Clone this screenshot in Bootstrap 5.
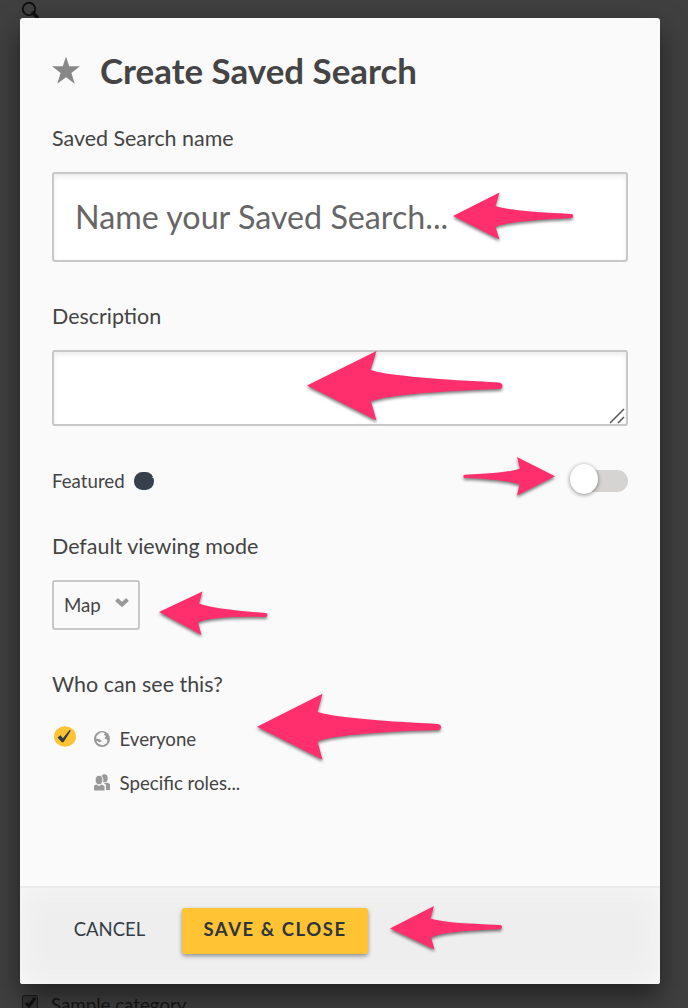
<!DOCTYPE html>
<html lang="en">
<head>
<meta charset="utf-8">
<title>Create Saved Search</title>
<link href="https://cdn.jsdelivr.net/npm/bootstrap@5.3.0/dist/css/bootstrap.min.css" rel="stylesheet">
<style>
body{font-family:Lato,"Open Sans",sans-serif;background:#404040;color:#444;width:688px;height:1008px;overflow:hidden}
.backdrop-top{height:18px;padding-left:21px}
.backdrop-bottom{height:24px;padding:9px 0 0 22px;overflow:hidden;color:#151515;font-size:18.7px;line-height:24px}
.backdrop-bottom svg{margin-top:2px}
.dialog{width:640px;height:966px;margin-left:20px;border-radius:3px;background:#fafafa;box-shadow:0 12px 28px rgba(0,0,0,.5)}
.dialog-main{padding:32px 32px 0}
.dialog-title{height:44px;margin-bottom:32px}
.dialog h1{font-size:34.9px;font-weight:700;line-height:44px;padding-bottom:2px}
.field-label{font-size:21.45px;line-height:24px;height:26px;margin:0;display:block}
.form-control.boxed,.mode-select{border:2px solid #c8c8c8;border-radius:3px;box-shadow:inset 0 3px 5px rgba(0,0,0,.07)}
.form-control.name-box{height:90px;font-size:32.25px;padding:0 21px 2px;margin-top:20px;margin-bottom:42px}
.form-control.name-box::placeholder{color:#666;opacity:1}
.desc-wrap{margin:20px 0 42px;height:76px}
.form-control.desc-box{height:76px;resize:none}
.grip{right:2px;bottom:1px}
.feature-row{height:26px;font-size:18.7px;line-height:26px;margin-bottom:40px}
.toggle-track{width:56px;height:22px;border-radius:11px;background:#d5d4d2}
.toggle-knob{width:28px;height:30px;border-radius:50%;background:#fff;left:-2px;top:-6px;box-shadow:0 1px 4px rgba(0,0,0,.45)}
.mode-select{width:88px;height:50px;margin:20px 0 42px;padding:0 9px 0 10px;background:#fafafa;box-shadow:none;font-size:18.7px;color:#444}
.mode-select svg{margin-bottom:4px}
.role-list{margin-top:20px}
.role-row{height:44px;font-size:18.7px}
.role-row svg{margin-bottom:3px}
.role-row span{padding-bottom:2px}
.role-plain{padding-left:40px}
.dialog-foot{height:98px;border-top:2px solid #ebebeb;background:#eee;border-radius:0 0 3px 3px;box-shadow:inset 0 0 30px #f7f7f7;padding:20px 0 0 32px}
.dialog-foot .btn{height:46px;font-size:18.5px;border:0;padding:0 0 3px;color:#343d46;line-height:43px}
.dialog-foot .btn-cancel{width:115px;margin-right:15px}
.dialog-foot .btn-save{width:186px;background:#ffc334;border-radius:3px;font-weight:700;letter-spacing:1.55px;color:#2e353b;box-shadow:0 2px 4px rgba(0,0,0,.4)}
.pointers{left:0;top:0;pointer-events:none;filter:drop-shadow(0 2px 1.5px rgba(0,0,0,.5))}
</style>
<script src="https://cdn.jsdelivr.net/npm/bootstrap@5.3.0/dist/js/bootstrap.bundle.min.js"></script>
</head>
<body class="position-relative">
<div class="backdrop-top">
<svg class="d-block" width="20" height="18" fill="none" stroke="#111"><circle cx="8" cy="9" r="6.2" stroke-width="2"/><path d="M12 13l4 4" stroke-width="3.5" stroke-linecap="round"/></svg>
</div>
<main class="dialog position-relative d-flex flex-column">
<div class="dialog-main flex-grow-1">
<div class="dialog-title d-flex align-items-center">
<svg class="flex-shrink-0" width="48" height="44" fill="#888"><path d="M14 6.500l3.200 9.700H28l-8.600 6.700 3.300 10.800L14 27.300l-8.700 6.400 3.300-10.800L0 16.200h10.800z"/></svg>
<h1 class="m-0">Create Saved Search</h1>
</div>
<label class="field-label" for="name">Saved Search name</label>
<input id="name" class="form-control boxed name-box" placeholder="Name your Saved Search...">
<label class="field-label" for="desc">Description</label>
<div class="desc-wrap position-relative">
<textarea id="desc" class="form-control boxed desc-box"></textarea>
<svg class="grip position-absolute" width="18" height="18" stroke="#555" stroke-width="1.5"><path d="M2 16L16 2M10 16l6-6"/></svg>
</div>
<div class="feature-row d-flex align-items-center">
<span>Featured</span>
<svg class="ms-2" width="28" height="22"><rect x="1" y="2" width="20" height="18" rx="8.500" fill="#37404a"/><text x="18.500" y="17" font-size="16" fill="#fff">?</text></svg>
<div class="toggle-track position-relative ms-auto"><span class="toggle-knob position-absolute"></span></div>
</div>
<div class="field-label">Default viewing mode</div>
<div class="mode-select d-flex align-items-center justify-content-between"><span>Map</span>
<svg width="14" height="14"><path d="M1.500 3.500L7 8.500l5.500-5" fill="none" stroke="#999" stroke-width="4"/></svg></div>
<div class="field-label">Who can see this?</div>
<div class="role-list">
<div class="role-row d-flex align-items-center">
<svg width="40" height="30"><ellipse cx="13" cy="12.500" rx="11" ry="10.300" fill="#ffc334"/><path d="M5.500 13.500l3-2.200 2.400 3L17.500 6l1.400.5L11.500 18.300H9.800z" fill="#343d46"/></svg>
<svg width="27.500" height="18"><circle cx="10" cy="9" r="8" fill="#999"/><path d="M7 3.500L9.500 2.300L13 3L11.800 5L14 5.800L12.500 8.500L15.500 10L14.500 13.500L11 15.200Q6 14.800 4.500 11.500L5.500 11L7.500 12.500L10 11L8 9.500L4 8.500Q4.200 5.500 7 3.500Z" fill="#fafafa"/></svg>
<span>Everyone</span>
</div>
<div class="role-row role-plain d-flex align-items-center">
<svg width="27.500" height="18" fill="#999"><ellipse cx="12.500" cy="4.300" rx="3.200" ry="4"/><ellipse cx="7" cy="6" rx="3.900" ry="4.800" stroke="#fafafa" stroke-width="1"/><path d="M2 11.500l2.500-1q2.500 2.500 5 0l3 1.500v4.500H2zM11.500 8.800q2.500.5 3.500-.3l3 1.500v6h-4v-5z"/></svg>
<span>Specific roles...</span>
</div>
</div>
</div>
<footer class="dialog-foot d-flex align-items-start">
<button class="btn btn-cancel">CANCEL</button>
<button class="btn btn-save">SAVE &amp; CLOSE</button>
</footer>
</main>
<div class="backdrop-bottom d-flex align-items-start">
<svg width="16" height="18"><rect x=".5" y=".5" width="15" height="17" rx="2" fill="#333" stroke="#1b1b1b"/><path d="M4 8l3 3 6-8" fill="none" stroke="#111" stroke-width="3"/></svg>
<span style="margin-left:13px">Sample category</span>
</div>
<svg class="pointers position-absolute" width="688" height="1008" fill="#ff2e6c">
<path d="M453 216L499.500 192.500L495.500 206Q508 211 572 214Q574.500 216 572 218Q508 221 495.500 227L499.500 239.500Z"/>
<path d="M307 385.500L376.500 351L370.500 370Q390 377 499 382.500Q502.500 383 502.500 386Q502.500 388.500 499 389Q390 393 371 401.500L376.500 420.500Z"/>
<path d="M555 476.300L517 457L520 468.500Q510 473 464.500 474.800Q462 476.500 464.500 478Q506 479.500 519.500 484.500L517 495.500Z"/>
<path d="M159 612L202.500 591.500L199 603.500Q212 609 266 613Q269 615 266 617Q212 616 198 622.500L201.500 635Z"/>
<path d="M257 726.700L322.500 693.700L317.500 712Q340 719 438 724Q441 724.500 441 727Q441 729.500 438 730Q338 733 317.500 741.500L322.500 759.700Z"/>
<path d="M390 928.500L434 906L430.500 918.500Q442 923 500.500 925Q503.500 927 500.500 929.300Q443 931 431 937.500L434.500 949.500Z"/>
</svg>
</body>
</html>
